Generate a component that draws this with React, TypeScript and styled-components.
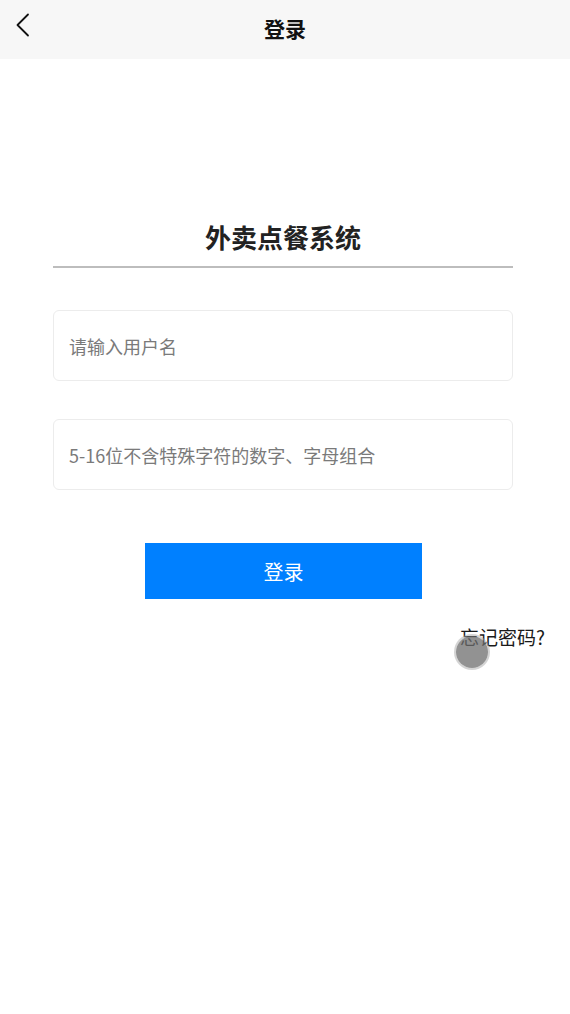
import styled, { createGlobalStyle } from 'styled-components';

const GlobalStyle = createGlobalStyle`
  html, body {
    margin: 0;
    padding: 0;
    background: #fff;
    font-family: "Noto Sans CJK SC", "Noto Sans", sans-serif;
  }
`;

const BackIcon = () => (
  <svg width="16" height="24" viewBox="0 0 16 24" fill="none">
    <path d="M13 1.5L2.5 12L13 22.5" stroke="#111" strokeWidth="1.8" strokeLinecap="round" strokeLinejoin="round" />
  </svg>
);

const App = () => {
  return (
    <StPage>
      <GlobalStyle />
      <StHeader>
        <StBack>
          <BackIcon />
        </StBack>
        <h1>登录</h1>
        <div />
      </StHeader>

      <StBody>
        <StTitle>外卖点餐系统</StTitle>
        <StForm>
          <StInput placeholder="请输入用户名" />
          <StInput placeholder="5-16位不含特殊字符的数字、字母组合" type="password" />
        </StForm>
        <StSubmit type="button">登录</StSubmit>
        <StForgot>
          <span>忘记密码?</span>
          <StTouch />
        </StForgot>
      </StBody>
    </StPage>
  );
};

export default App;

const StPage = styled.main`
  width: 570px;
  min-height: 1014px;
  background: #fff;
`;

const StHeader = styled.header`
  display: grid;
  grid-template-columns: 48px auto 48px;
  justify-content: space-between;
  align-items: center;

  height: 59px;
  background: #f7f7f7;

  h1 {
    margin: 0 0 2px;
    font-size: 21px;
    font-weight: 700;
    color: #111;
    line-height: 1;
  }
`;

const StBack = styled.div`
  display: flex;
  align-items: flex-start;
  padding: 13px 0 0 15px;
  height: 46px;
`;

const StBody = styled.section`
  display: flex;
  flex-direction: column;
  padding-top: 155px;
`;

const StTitle = styled.h2`
  margin: 0 0 0 53px;
  width: 460px;
  height: 52px;
  border-bottom: 2px solid #bdbdbd;

  font-size: 26px;
  font-weight: 700;
  line-height: 46px;
  text-align: center;
  color: #222;
`;

const StForm = styled.div`
  display: flex;
  flex-direction: column;
  gap: 38px;
  margin: 42px 0 0 53px;
  width: 460px;
`;

const StInput = styled.input`
  box-sizing: border-box;
  height: 71px;
  padding: 0 15px;
  border: 1px solid #ececec;
  border-radius: 6px;
  outline: none;

  font-family: "Noto Sans CJK SC", "Noto Sans", sans-serif;
  font-size: 18px;
  color: #333;

  &::placeholder {
    color: #7a7a7a;
  }
`;

const StSubmit = styled.button`
  margin: 53px 0 0 145px;
  width: 277px;
  height: 56px;
  border: none;
  background: #0080ff;

  font-family: "Noto Sans CJK SC", "Noto Sans", sans-serif;
  font-size: 20px;
  color: #fff;
`;

const StForgot = styled.div`
  position: relative;
  display: flex;
  justify-content: flex-end;
  margin-top: 25px;
  padding-right: 25px;

  span {
    font-size: 19px;
    line-height: 26px;
    color: #1a1a1a;
  }
`;

const StTouch = styled.div`
  position: absolute;
  left: 456px;
  top: 12px;
  width: 32px;
  height: 32px;
  border-radius: 50%;
  background: rgba(110, 110, 110, 0.75);
  box-shadow: 0 0 0 2px rgba(170, 170, 170, 0.5);
`;
